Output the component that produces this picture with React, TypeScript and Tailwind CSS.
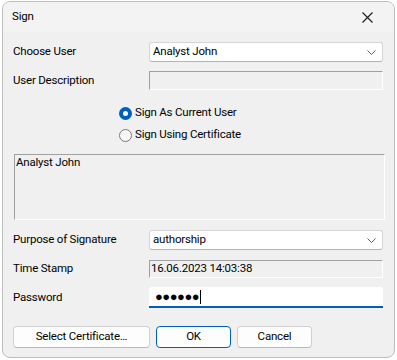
import React from "react";

const Chevron = () => (
  <svg width="9" height="5" viewBox="0 0 9 5" className="text-[#5f5f5f]">
    <path d="M0.5 0.5 L4.5 4.5 L8.5 0.5" fill="none" stroke="currentColor" strokeWidth="1" />
  </svg>
);

const Combo = ({ value, className = "" }: { value: string; className?: string }) => (
  <div
    className={`flex h-[20px] w-[234px] items-center justify-between rounded-[3px] border border-[#d4d4d4] border-b-[#b5b5b5] bg-white pl-[3px] pr-[6px] ${className}`}
  >
    <span>{value}</span>
    <Chevron />
  </div>
);

// classic sunken read-only edit box
const Sunken = ({ children, className = "" }: { children?: React.ReactNode; className?: string }) => (
  <div
    className={`border border-t-[#a0a0a0] border-l-[#a0a0a0] border-r-white border-b-white bg-[#f0f0f0] ${className}`}
  >
    {children}
  </div>
);

const Radio = ({ checked, label }: { checked?: boolean; label: string }) => (
  <div className="flex h-[22px] items-center gap-[3px]">
    {checked ? (
      <span className="flex h-[13px] w-[13px] items-center justify-center rounded-full bg-[#005fb8]">
        <span className="h-[5px] w-[5px] rounded-full bg-white" />
      </span>
    ) : (
      <span className="h-[13px] w-[13px] rounded-full border border-[#7a7a7a] bg-[#f7f7f7]" />
    )}
    <span>{label}</span>
  </div>
);

const Button = ({ label, primary, className = "" }: { label: string; primary?: boolean; className?: string }) => (
  <div
    className={`flex h-[22px] items-center justify-center rounded-[4px] border bg-[#fdfdfd] ${
      primary ? "border-[#005fb8]" : "border-[#d0d0d0] border-b-[#b8b8b8]"
    } ${className}`}
  >
    {label}
  </div>
);

export default function App() {
  return (
    <div className="h-[360px] w-[397px] bg-white pl-[2px] pt-[1px] text-[11.5px] leading-none tracking-[-0.2px] text-black [font-family:'Segoe_UI',Roboto,sans-serif]">
      <div className="flex h-[357px] w-[393px] flex-col overflow-hidden rounded-[8px] border border-[#bdbdbd] bg-[#f0f0f0]">
        {/* Title bar */}
        <div className="flex h-[30px] items-center justify-between bg-[#f3f3f3] pl-[9px] pr-[21px]">
          <span>Sign</span>
          <svg width="11" height="11" viewBox="0 0 11 11">
            <path d="M0.5 0.5 L10.5 10.5 M10.5 0.5 L0.5 10.5" stroke="#1a1a1a" strokeWidth="1.1" />
          </svg>
        </div>

        {/* Body */}
        <div className="flex flex-col pl-[10px] pr-[9px]">
          <div className="mt-[10px] flex items-center">
            <span className="w-[136px]">Choose User</span>
            <Combo value="Analyst John" />
          </div>

          <div className="mt-[9px] flex items-center">
            <span className="w-[136px]">User Description</span>
            <Sunken className="h-[19px] w-[234px]" />
          </div>

          <div className="mt-[12px] flex flex-col pl-[106px]">
            <Radio checked label="Sign As Current User" />
            <Radio label="Sign Using Certificate" />
          </div>

          <Sunken className="ml-[1px] mt-[8px] h-[66px] w-[371px] pl-[1px] pt-[2px]">
            Analyst John
          </Sunken>

          <div className="mt-[10px] flex items-center">
            <span className="w-[136px]">Purpose of Signature</span>
            <Combo value="authorship" />
          </div>

          <div className="mt-[10px] flex items-center">
            <span className="w-[136px]">Time Stamp</span>
            <Sunken className="flex h-[18px] w-[234px] items-center pl-[1px]">16.06.2023 14:03:38</Sunken>
          </div>

          <div className="mt-[9px] flex items-center">
            <span className="w-[136px]">Password</span>
            <div className="flex h-[21px] w-[234px] items-center rounded-t-[3px] border-b-2 border-[#005fb8] bg-white pl-[6px]">
              <span className="text-[13px] tracking-[-0.5px]">●●●●●●</span>
              <span className="ml-[1px] h-[14px] w-[1px] bg-black" />
            </div>
          </div>

          <div className="mt-[18px] flex gap-[6px]">
            <Button label="Select Certificate…" className="w-[137px]" />
            <Button label="OK" primary className="w-[75px]" />
            <Button label="Cancel" className="w-[75px]" />
          </div>
        </div>
      </div>
    </div>
  );
}
